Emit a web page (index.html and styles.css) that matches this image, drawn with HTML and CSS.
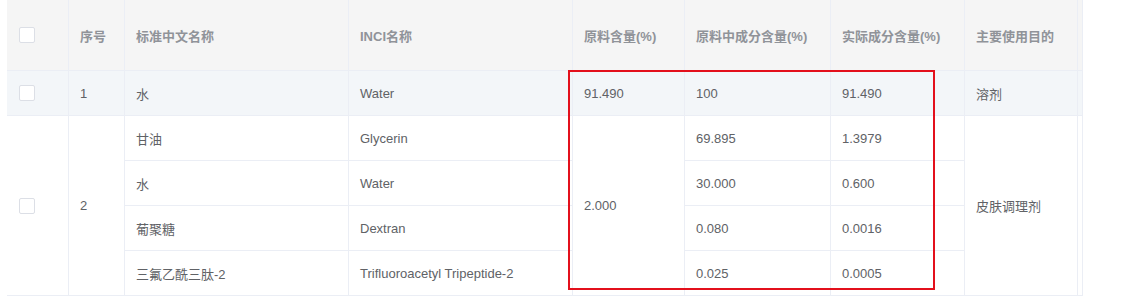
FILE: index.html
```html
<!DOCTYPE html>
<html lang="zh-CN">
<head>
<meta charset="utf-8">
<title>成分表</title>
<link rel="stylesheet" href="styles.css">
</head>
<body>
<div class="wrap">
  <div class="table">
    <div class="cell th sel"><span class="checkbox"></span></div>
    <div class="cell th">序号</div>
    <div class="cell th">标准中文名称</div>
    <div class="cell th">INCI名称</div>
    <div class="cell th">原料含量(%)</div>
    <div class="cell th">原料中成分含量(%)</div>
    <div class="cell th">实际成分含量(%)</div>
    <div class="cell th">主要使用目的</div>
    <div class="cell th gutter"></div>

    <div class="cell hl sel"><span class="checkbox"></span></div>
    <div class="cell hl">1</div>
    <div class="cell hl">水</div>
    <div class="cell hl">Water</div>
    <div class="cell hl">91.490</div>
    <div class="cell hl">100</div>
    <div class="cell hl">91.490</div>
    <div class="cell hl">溶剂</div>
    <div class="cell hl gutter"></div>

    <div class="cell sel span4"><span class="checkbox"></span></div>
    <div class="cell span4">2</div>
    <div class="cell">甘油</div>
    <div class="cell">Glycerin</div>
    <div class="cell span4">2.000</div>
    <div class="cell">69.895</div>
    <div class="cell">1.3979</div>
    <div class="cell span4">皮肤调理剂</div>
    <div class="cell gutter span4"></div>

    <div class="cell">水</div>
    <div class="cell">Water</div>
    <div class="cell">30.000</div>
    <div class="cell">0.600</div>

    <div class="cell">葡聚糖</div>
    <div class="cell">Dextran</div>
    <div class="cell">0.080</div>
    <div class="cell">0.0016</div>

    <div class="cell">三氟乙酰三肽-2</div>
    <div class="cell">Trifluoroacetyl Tripeptide-2</div>
    <div class="cell">0.025</div>
    <div class="cell">0.0005</div>
  </div>
  <div class="mark"></div>
</div>
</body>
</html>
```

FILE: styles.css
```css
html, body {
  margin: 0;
  padding: 0;
  background: #ffffff;
}

body {
  font-family: "Liberation Sans", "Noto Sans CJK SC", sans-serif;
  font-size: 13px;
  color: #606266;
}

.wrap {
  position: relative;
  padding-left: 7px;
  width: 1076px;
}

.table {
  display: grid;
  grid-template-columns: 62px 56px 224px 224px 112px 146px 134px 113px 5px;
  grid-template-rows: 71px repeat(5, 45px);
}

.cell {
  box-sizing: border-box;
  display: flex;
  align-items: center;
  padding-left: 11px;
  border-right: 1px solid #ebeef5;
  border-bottom: 1px solid #ebeef5;
  white-space: nowrap;
  overflow: hidden;
}

.th {
  background: #f5f5f5;
  color: #909399;
  font-weight: 600;
}

.hl {
  background: #f3f6f9;
}

.sel {
  padding-left: 12px;
}

.gutter {
  padding-left: 0;
}

.span4 {
  grid-row: span 4;
}

.checkbox {
  box-sizing: border-box;
  display: block;
  width: 16px;
  height: 16px;
  border: 1px solid #dcdfe6;
  border-radius: 2px;
  background: #ffffff;
}

.mark {
  position: absolute;
  left: 568px;
  top: 70px;
  width: 367px;
  height: 220px;
  box-sizing: border-box;
  border: 2px solid #e3101c;
  pointer-events: none;
}
```
